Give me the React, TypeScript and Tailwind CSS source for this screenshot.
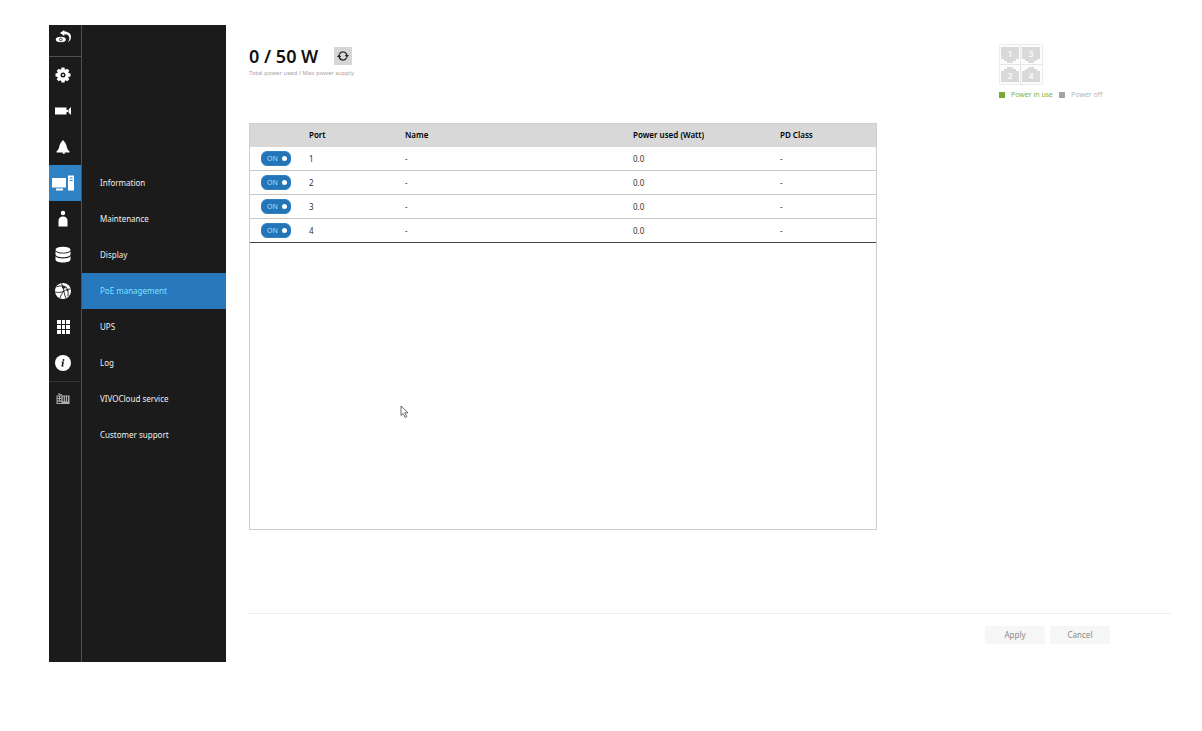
import { useState, type ReactNode } from "react";

function Icon({ children, className = "" }: { children: ReactNode; className?: string }) {
  return (
    <svg viewBox="0 0 24 20" className={`h-5 w-6 shrink-0 ${className}`} fill="currentColor" aria-hidden="true">
      {children}
    </svg>
  );
}

const BackIcon = () => (
  <Icon>
    <ellipse cx="9.800" cy="12.500" rx="5" ry="2.800" />
    <circle cx="9.800" cy="12.500" r="1.400" fill="none" stroke="#1b1b1b" strokeWidth="0.800" />
    <path d="M9 6l4.300-3v1.500c4.200 0 6.700 2.300 6.700 5.500 0 2.500-1.200 4.200-3.400 5.300 1.300-1.500 1.900-3 1.700-4.700-.3-2.200-1.900-3.400-5-3.400v1.700z" />
  </Icon>
);

const GearIcon = () => (
  <Icon>
    <g transform="translate(12 10)">
      <circle r="4.200" fill="none" stroke="currentColor" strokeWidth="3.400" />
      {[0, 45, 90, 135, 180, 225, 270, 315].map((a) => (
        <path key={a} transform={`rotate(${a})`} d="M-1.900 -5L-1.500 -7.500H1.500L1.900 -5Z" />
      ))}
      <circle r="1" />
    </g>
  </Icon>
);

const CameraIcon = () => (
  <Icon>
    <path d="M4 6.500h11.500v7H4zM15.500 9h1.500v2h-1.500zM17.500 8.500L20 6v8l-2.500-2.500z" />
  </Icon>
);

const BellIcon = () => (
  <Icon>
    <path d="M12 3.500c.9 0 1.300.6 1.500 1.500 1.500 1.200 1.800 3 2.300 5 .5 1.900 1.300 3.200 2.700 4.500v1h-13v-1c1.400-1.300 2.200-2.600 2.700-4.500.5-2 .8-3.800 2.300-5 .2-.9.600-1.500 1.500-1.500zM11.800 15.500h2v1.300h-2z" />
  </Icon>
);

const SystemIcon = () => (
  <Icon>
    <path d="M1 5h14v9.500H1zM5 15.500h7v2H5z" />
    <path fillRule="evenodd" d="M17 2.500h6V17.500h-6zM18.700 4.500v1h3v-1zM18.700 7v1h3V7z" />
  </Icon>
);

const UserIcon = () => (
  <Icon>
    <circle cx="12" cy="4" r="2.200" />
    <path d="M7.500 17.500v-5.500c0-3 1.500-4.500 4.500-4.500s4.500 1.500 4.500 4.500v5.500z" />
  </Icon>
);

const DatabaseIcon = () => (
  <Icon>
    <ellipse cx="12" cy="4.700" rx="7.500" ry="3" />
    <path d="M4.500 6.300c1.200 1.500 4 2.300 7.500 2.300s6.300-.8 7.500-2.300v3.200c0 1.600-3.300 2.700-7.500 2.700s-7.500-1.100-7.500-2.700z" />
    <path d="M4.500 11.300c1.200 1.500 4 2.200 7.500 2.200s6.300-.7 7.500-2.200v3.200c0 1.700-3.300 3-7.500 3s-7.500-1.300-7.500-3z" />
  </Icon>
);

const NetworkIcon = () => (
  <Icon>
    <circle cx="12" cy="10" r="8" />
    <g fill="none" stroke="#1b1b1b" strokeWidth="0.900">
      <path d="M5.500 5.800c3.500-1.300 7-1.300 9.500.2 1.800 2 2.500 5 2 9.500M10.300 2.200c1.500 2.300 2.300 5 2.500 8 .5 2.500 1.300 5 2.300 7.300M4.200 11c3 .8 6 .5 8.600-.8 2.200-1.300 4-2.200 6.700-2.200M12.800 10.200c-1.800 2-3 4-3.800 7" />
    </g>
    <path d="M10.500 5.300l3.500.2.800 1.700-3.300.3zM15.500 8.300l1.700-.5.200 2-1.500.4z" fill="#1b1b1b" />
  </Icon>
);

const GridIcon = () => (
  <Icon>
    {[3, 8, 13].map((y) => [6, 11, 15].map((x, i) => <rect key={`${x}-${y}`} x={x} y={y} width={i === 1 ? 3 : 4} height="4" />))}
  </Icon>
);

const InfoIcon = () => (
  <Icon>
    <circle cx="12" cy="10" r="8" />
    <circle cx="12.500" cy="7" r="0.900" fill="#1b1b1b" />
    <path d="M10.700 8.600h2.300l-.9 4.200h.7l-.2.800h-2.300l.9-4.200h-.7z" fill="#1b1b1b" />
  </Icon>
);

const KeyboardIcon = () => (
  <Icon className="text-[#b0b0b0]">
    <path d="M7.500 3h1v2.500h-1zM8.500 4.300h2.500v1H8.500z" />
    <path fillRule="evenodd" d="M5.500 5.500h13V14h-13zM6.500 6.500V8H8V6.500zM9 6.500V8h1.500V6.500zM6.500 9v1.500H8V9zM9 9v1.500h1.500V9zM6.500 11.700v1.300h4v-1.300zM11.700 6.500v5h1v-5zM13.900 6.500v5h1v-5zM16.100 6.500v5h1v-5z" />
  </Icon>
);

const rail = [
  { label: "Settings", icon: <GearIcon /> },
  { label: "Camera", icon: <CameraIcon /> },
  { label: "Alarm", icon: <BellIcon /> },
  { label: "System", icon: <SystemIcon />, active: true },
  { label: "User", icon: <UserIcon /> },
  { label: "Storage", icon: <DatabaseIcon /> },
  { label: "Network", icon: <NetworkIcon /> },
  { label: "Applications", icon: <GridIcon /> },
  { label: "About", icon: <InfoIcon /> },
];

const menu = [
  "Information",
  "Maintenance",
  "Display",
  "PoE management",
  "UPS",
  "Log",
  "VIVOCloud service",
  "Customer support",
];

const ports = [
  { port: 1, name: "-", power: "0.0", pd: "-" },
  { port: 2, name: "-", power: "0.0", pd: "-" },
  { port: 3, name: "-", power: "0.0", pd: "-" },
  { port: 4, name: "-", power: "0.0", pd: "-" },
];

function Rail() {
  return (
    <nav aria-label="Sections" className="w-[33px] shrink-0 border-r border-[#505050]">
      <a href="#back" aria-label="Back to live view" className="flex h-8 items-center justify-center border-b border-[#505050] pr-1 pb-2">
        <BackIcon />
      </a>
      {rail.map((item) => (
        <a
          key={item.label}
          href={`#${item.label.toLowerCase()}`}
          aria-label={item.label}
          className={`flex h-9 items-center justify-center pr-1 ${item.active ? "bg-[#2f82c4]" : ""}`}
        >
          {item.icon}
        </a>
      ))}
      <a href="#keyboard" aria-label="Keyboard" className="flex h-9 items-center justify-center border-t border-[#363636] pr-1">
        <KeyboardIcon />
      </a>
    </nav>
  );
}

function Menu() {
  return (
    <nav aria-label="System" className="w-36 shrink-0 pt-[140px] text-[8px]">
      {menu.map((item) => (
        <a
          key={item}
          href="#"
          className={`flex h-9 items-center pl-[18px] ${item === "PoE management" ? "bg-[#2878bd] text-[#7fe3ff]" : "text-[#f0f0f0]"}`}
        >
          {item}
        </a>
      ))}
    </nav>
  );
}

function Toggle({ port }: { port: number }) {
  const [on, setOn] = useState(true);
  return (
    <label
      className={`relative flex h-[15px] w-[30px] items-center justify-between rounded-[6px] border pr-[3px] pl-[5px] text-[7px] leading-none ${on ? "border-[#2f84c8] bg-[#2474b8] text-[#a5e2fb]" : "border-[#999999] bg-[#aaaaaa] text-white"}`}
    >
      <input type="checkbox" className="sr-only" checked={on} onChange={() => setOn(!on)} aria-label={`Port ${port} power`} />
      <span>{on ? "ON" : "OFF"}</span>
      <span className="size-[5px] rounded-full bg-white" />
    </label>
  );
}

function PortTable() {
  return (
    <div className="flex-1 border border-[#cfcfcf]">
      <table className="w-full table-fixed border-separate border-spacing-0 text-left text-[8px] leading-3 text-[#333333]">
        <colgroup>
          <col className="w-[59px]" />
          <col className="w-24" />
          <col />
          <col className="w-[147px]" />
          <col className="w-[96px]" />
        </colgroup>
        <thead>
          <tr className="h-[23px] bg-[#d8d8d8] text-black [&_th]:pb-[2px]">
            <th aria-label="Power" />
            <th className="font-semibold">Port</th>
            <th className="font-semibold">Name</th>
            <th className="font-semibold">Power used (Watt)</th>
            <th className="font-semibold">PD Class</th>
          </tr>
        </thead>
        <tbody className="[&_td]:border-b [&_td]:border-[#c8c8c8] [&_tr:last-child_td]:border-[#444444]">
          {ports.map((row) => (
            <tr key={row.port} className="h-6">
              <td className="pl-[11px]">
                <Toggle port={row.port} />
              </td>
              <td>{row.port}</td>
              <td>{row.name}</td>
              <td>{row.power}</td>
              <td>{row.pd}</td>
            </tr>
          ))}
        </tbody>
      </table>
    </div>
  );
}

function PortDiagram() {
  const cells = [
    { n: 1, x: 2, y: 2, up: false },
    { n: 3, x: 23, y: 2, up: false },
    { n: 2, x: 2, y: 21, up: true },
    { n: 4, x: 23, y: 21, up: true },
  ];
  return (
    <svg viewBox="0 0 44 41" className="h-[41px] w-11" aria-label="Port status">
      <rect x="0.500" y="0.500" width="43" height="40" rx="1" fill="#fcfcfc" stroke="#ececec" />
      <path d="M0 20.500h44M21.500 0v41" stroke="#e6e6e6" />
      {cells.map((c) => (
        <g key={c.n} transform={`translate(${c.x} ${c.y})`}>
          <path
            d={c.up ? "M0 17V6h3V4h3V2h6v2h3v2h3v11z" : "M0 1v12h3v2h3v2h6v-2h3v-2h3V1z"}
            fill="#d9d9d9"
          />
          <text x="9" y={c.up ? 14 : 11} textAnchor="middle" fontSize="9" fontWeight="600" fill="#fafafa">
            {c.n}
          </text>
        </g>
      ))}
    </svg>
  );
}

export default function App() {
  return (
    <div className="relative flex min-h-screen bg-white pt-[25px] pr-[31px] pb-[69px] pl-[49px] font-['Noto_Sans','Open_Sans',sans-serif]">
      <aside className="flex shrink-0 bg-[#1b1b1b] text-white">
        <Rail />
        <Menu />
      </aside>

      <main className="ml-[23px] flex flex-1 flex-col">
        <div className="flex flex-1 gap-[122px]">
          <section className="flex flex-1 flex-col">
            <header className="h-[98px] pt-[19px]">
              <div className="flex items-center gap-4">
                <h1 className="text-[18px] leading-6 font-semibold text-[#111111]">0 / 50 W</h1>
                <button type="button" aria-label="Refresh" className="flex size-[18px] items-center justify-center bg-[#d6d6d6]">
                  <svg viewBox="0 0 12 12" className="size-3" aria-hidden="true">
                    <path d="M2.200 4.400A4.100 4.100 0 0 1 9.900 5M9.800 7.600A4.100 4.100 0 0 1 2.100 7" fill="none" stroke="#222222" strokeWidth="1.200" />
                    <path d="M7.800 5h4.200L9.900 7.700zM0 7h4.200L2.100 4.300z" fill="#222222" />
                  </svg>
                </button>
              </div>
              <p className="pt-px text-[6px] leading-2 text-[#a4a4a4]">Total power used / Max power supply</p>
            </header>
            <PortTable />
          </section>

          <section className="w-[172px] pt-[19px]">
            <PortDiagram />
            <ul className="mt-1 flex gap-[6px] text-[7px] leading-3">
              <li className="flex items-center gap-[6px] text-[#84b32f]">
                <span className="size-[6px] bg-[#78a834]" />
                Power in use
              </li>
              <li className="flex items-center gap-[6px] text-[#b4b4b4]">
                <span className="size-[6px] bg-[#a4a4a4]" />
                Power off
              </li>
            </ul>
          </section>
        </div>

        <footer className="mt-[83px] flex justify-end gap-[5px] border-t border-[#ededed] pt-3 pr-[61px] pb-[18px] text-[8px] text-[#8a8a8a]">
          <button type="button" className="h-[18px] w-[60px] bg-[#f6f6f6]">Apply</button>
          <button type="button" className="h-[18px] w-[60px] bg-[#f6f6f6]">Cancel</button>
        </footer>
      </main>

      <svg viewBox="0 0 9 14" className="pointer-events-none absolute top-[405px] left-[400px] h-[14px] w-[9px]" aria-hidden="true">
        <path d="M1 1v9.500l2.200-2 2 4 1.600-.8-2-3.900H8z" fill="#ffffff" stroke="#444444" strokeWidth="0.800" />
      </svg>
    </div>
  );
}
